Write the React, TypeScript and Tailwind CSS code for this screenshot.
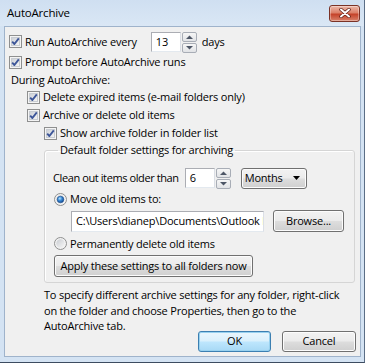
import React from "react";

const font = { fontFamily: '"Open Sans", "Noto Sans", sans-serif' };

const btnClass =
  "flex items-center justify-center whitespace-nowrap rounded-[3px] border border-[#707070] bg-[linear-gradient(#f2f2f2_0%,#ebebeb_48%,#dddddd_52%,#cfcfcf_100%)] text-black shadow-[inset_0_0_0_1px_#fcfcfc]";

function Check() {
  return (
    <svg width="13" height="13" viewBox="0 0 13 13" className="shrink-0">
      <defs>
        <linearGradient id="cbg" x1="0" y1="0" x2="1" y2="1">
          <stop offset="0" stopColor="#cbcfd5" />
          <stop offset="1" stopColor="#f6f6f6" />
        </linearGradient>
      </defs>
      <rect x="0.5" y="0.5" width="12" height="12" fill="#f4f4f4" stroke="#8e8f8f" />
      <rect x="2.5" y="2.5" width="8" height="8" fill="url(#cbg)" stroke="#c8ccd2" />
      <path d="M3.2 6.6 L5.4 9 L9.8 3.4" fill="none" stroke="#3d5699" strokeWidth="1.9" strokeLinejoin="round" />
    </svg>
  );
}

function Radio({ on }: { on?: boolean }) {
  return (
    <svg width="13" height="13" viewBox="0 0 13 13" className="shrink-0">
      <defs>
        <radialGradient id="rdon" cx="0.4" cy="0.35" r="0.7">
          <stop offset="0" stopColor="#b9e4fd" />
          <stop offset="0.45" stopColor="#3a8bd6" />
          <stop offset="1" stopColor="#103f85" />
        </radialGradient>
        <linearGradient id="rdoff" x1="0" y1="0" x2="1" y2="1">
          <stop offset="0" stopColor="#c9ccd1" />
          <stop offset="1" stopColor="#f7f7f7" />
        </linearGradient>
      </defs>
      <circle cx="6.5" cy="6.5" r="6" fill="#f2f2f2" stroke="#8e8f8f" />
      <circle cx="6.5" cy="6.5" r="4.2" fill="url(#rdoff)" />
      {on && <circle cx="6.5" cy="6.5" r="3.3" fill="url(#rdon)" stroke="#1b4f8f" strokeWidth="0.6" />}
    </svg>
  );
}

function Spinner({ value }: { value: string }) {
  return (
    <div className="flex h-[20px]">
      <div className="flex w-[30px] items-center border border-[#abadb3] border-b-[#e3e9ef] border-r-[#dbdfe6] bg-white pl-[4px]">
        {value}
      </div>
      <div className="ml-[1px] flex w-[15px] flex-col gap-[1px]">
        {["M3 6 L6.5 2.5 L10 6 Z", "M3 2 L6.5 5.5 L10 2 Z"].map((d) => (
          <div
            key={d}
            className="flex flex-1 items-center justify-center rounded-[2px] border border-[#a8adb6] bg-[linear-gradient(#f6f6f6,#e1e3e6)]"
          >
            <svg width="13" height="8" viewBox="0 0 13 8">
              <path d={d} fill="#4d5666" />
            </svg>
          </div>
        ))}
      </div>
    </div>
  );
}

function Row({ children, className = "" }: { children: React.ReactNode; className?: string }) {
  return <div className={`flex items-center gap-[4px] ${className}`}>{children}</div>;
}

export default function App() {
  return (
    <div
      className="flex h-[363px] w-[365px] flex-col border-r border-b border-r-[#5b6e86] border-b-[#3d4c60] bg-[#d4e3f3] text-[11px] leading-[16px] tracking-[-0.2px] text-black"
      style={font}
    >
      <div className="flex h-[26px] shrink-0 items-center justify-between pl-[7px] pr-[4px] bg-[linear-gradient(#cfdff1,#dae7f5)]">
        <span className="text-[11.5px]">AutoArchive</span>
        <div className="flex h-[17px] w-[31px] items-center justify-center rounded-[3px] border border-[#7a3226] bg-[linear-gradient(#ecb8aa_0%,#dc8068_45%,#c5432a_55%,#d9826a_100%)] shadow-[inset_0_0_0_1px_rgba(255,255,255,0.35)]">
          <svg width="12" height="10" viewBox="0 0 12 10">
            <path d="M2 1.5 L10 8.5 M10 1.5 L2 8.5" stroke="#5a1b12" strokeWidth="3.4" strokeLinecap="round" />
            <path d="M2 1.5 L10 8.5 M10 1.5 L2 8.5" stroke="#ffffff" strokeWidth="2" strokeLinecap="round" />
          </svg>
        </div>
      </div>

      <div className="ml-[4px] mr-[3px] flex h-[331px] flex-col border border-[#9fb3cb] bg-[#f0f0f0] pl-[4px] pt-[4px]">
        <Row className="h-[21px]">
          <Check />
          <span className="ml-[-1px]">Run AutoArchive every</span>
          <div className="ml-[10px]">
            <Spinner value="13" />
          </div>
          <span className="ml-[1px]">days</span>
        </Row>
        <Row className="h-[20px]">
          <Check />
          <span className="ml-[-1px]">Prompt before AutoArchive runs</span>
        </Row>
        <div className="flex h-[16px] items-center pl-[2px]">During AutoArchive:</div>
        <div className="pl-[18px]">
          <Row className="h-[18px]">
            <Check />
            <span className="ml-[-1px]">Delete expired items (e-mail folders only)</span>
          </Row>
          <Row className="h-[18px]">
            <Check />
            <span className="ml-[-1px]">Archive or delete old items</span>
          </Row>
          <div className="pl-[17px]">
            <Row className="h-[18px]">
              <Check />
              <span className="ml-[-1px]">Show archive folder in folder list</span>
            </Row>
            <fieldset className="mr-[5px] rounded-[3px] border border-[#d5d5d5] pb-[5px] pl-[8px] shadow-[inset_1px_1px_0_#ffffff]">
              <legend className="ml-[5px] h-[16px] px-[2px] leading-[16px]">
                Default folder settings for archiving
              </legend>
              <div className="mt-[10px] flex h-[20px] items-center">
                <span className="tracking-[-0.4px]">Clean out items older than</span>
                <div className="ml-[6px]">
                  <Spinner value="6" />
                </div>
                <div className="ml-[10px] flex h-[21px] w-[66px] items-center justify-between rounded-[3px] border border-[#707070] bg-[linear-gradient(#f2f2f2_0%,#ebebeb_48%,#dddddd_52%,#cfcfcf_100%)] pl-[3px] pr-[6px] shadow-[inset_0_0_0_1px_#fcfcfc]">
                  <span>Months</span>
                  <svg width="7" height="4" viewBox="0 0 7 4">
                    <path d="M0 0 L7 0 L3.5 4 Z" fill="#000" />
                  </svg>
                </div>
              </div>
              <Row className="mt-[2px] h-[18px] pl-[1px]">
                <Radio on />
                <span className="ml-[-1px]">Move old items to:</span>
              </Row>
              <div className="mt-[2px] flex items-center pl-[18px]">
                <div className="flex h-[21px] w-[193px] items-center overflow-hidden whitespace-nowrap border border-[#abadb3] border-b-[#e3e9ef] border-r-[#dbdfe6] bg-white pl-[4px]">
                  C:\Users\dianep\Documents\Outlook Fi
                </div>
                <div className={`${btnClass} ml-[9px] h-[22px] w-[71px]`}>Browse...</div>
              </div>
              <Row className="mt-[2px] h-[19px] pl-[1px]">
                <Radio />
                <span className="ml-[-1px]">Permanently delete old items</span>
              </Row>
              <div className={`${btnClass} mt-[2px] ml-[1px] h-[22px] w-[199px]`}>
                Apply these settings to all folders now
              </div>
            </fieldset>
          </div>
        </div>
        <p className="mt-[4px] whitespace-nowrap pl-[35px] leading-[15.5px]">
          To specify different archive settings for any folder, right-click
          <br />
          on the folder and choose Properties, then go to the
          <br />
          AutoArchive tab.
        </p>
        <div className="mt-[-3px] flex justify-end gap-[11px] pr-[4px]">
          <div className="flex h-[21px] w-[73px] items-center justify-center rounded-[3px] border border-[#3c7fb1] bg-[linear-gradient(#eaf6fd_0%,#d9f0fc_48%,#bee6fd_52%,#a7d9f5_100%)] shadow-[inset_0_0_0_1px_#98d1ef]">
            OK
          </div>
          <div className={`${btnClass} h-[21px] w-[74px]`}>Cancel</div>
        </div>
      </div>
    </div>
  );
}
